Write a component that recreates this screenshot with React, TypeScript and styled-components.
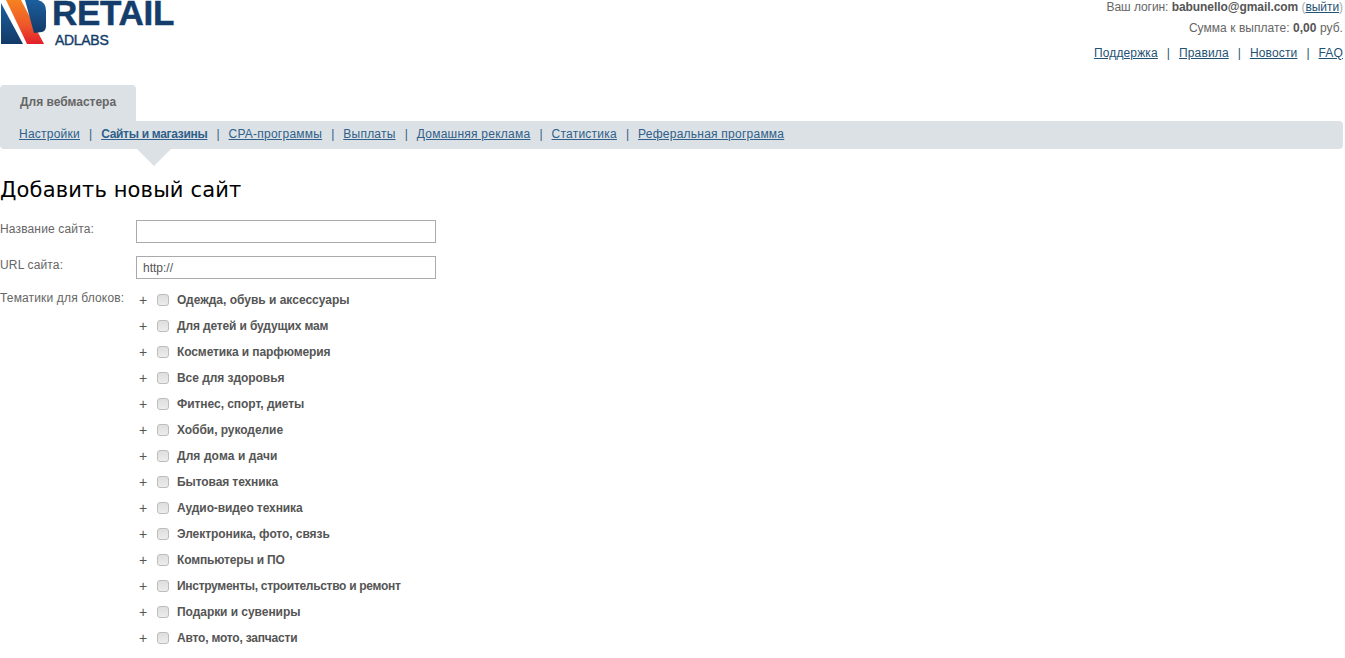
import React from "react";
import styled, { createGlobalStyle } from "styled-components";

const TOP_LINKS = ["Поддержка", "Правила", "Новости", "FAQ"];
const SUB_MENU = [
  "Настройки",
  "Сайты и магазины",
  "CPA-программы",
  "Выплаты",
  "Домашняя реклама",
  "Статистика",
  "Реферальная программа",
];
const TOPICS = [
  { name: "Одежда, обувь и аксессуары", spacing: 0 },
  { name: "Для детей и будущих мам", spacing: -0.14 },
  { name: "Косметика и парфюмерия", spacing: -0.1 },
  { name: "Все для здоровья", spacing: -0.05 },
  { name: "Фитнес, спорт, диеты", spacing: -0.05 },
  { name: "Хобби, рукоделие", spacing: -0.05 },
  { name: "Для дома и дачи", spacing: 0.1 },
  { name: "Бытовая техника", spacing: -0.1 },
  { name: "Аудио-видео техника", spacing: -0.1 },
  { name: "Электроника, фото, связь", spacing: -0.06 },
  { name: "Компьютеры и ПО", spacing: -0.16 },
  { name: "Инструменты, строительство и ремонт", spacing: -0.3 },
  { name: "Подарки и сувениры", spacing: -0.05 },
  { name: "Авто, мото, запчасти", spacing: -0.2 },
];

function Logo() {
  return (
    <svg width="47" height="46" viewBox="0 0 47 46">
      <defs>
        <linearGradient id="logoBand" x1="0" y1="0" x2="0" y2="1">
          <stop offset="0" stopColor="#f5821f" />
          <stop offset="0.55" stopColor="#ee5a2a" />
          <stop offset="1" stopColor="#e31f2b" />
        </linearGradient>
        <linearGradient id="logoBlue" x1="0" y1="0" x2="0" y2="1">
          <stop offset="0" stopColor="#1c5f9e" />
          <stop offset="1" stopColor="#123a68" />
        </linearGradient>
      </defs>
      <path d="M1 3 L23 44 L1 44 Z" fill="url(#logoBlue)" />
      <path d="M6 0 L21 0 L44 44 L27 44 Z" fill="url(#logoBand)" />
      <path
        d="M25 0 L38 0 Q46 2 46 11 L46 26 Q46 31 42 32 L34 33 Z"
        fill="url(#logoBlue)"
      />
    </svg>
  );
}

function App() {
  return (
    <Page>
      <GlobalStyle />
      <Header>
        <Brand>
          <Logo />
          <BrandText>
            <BrandName>RETAIL</BrandName>
            <BrandSub>ADLABS</BrandSub>
          </BrandText>
        </Brand>
        <Account>
          <AccountLine $spacing={-0.06}>
            Ваш логин: <b>babunello@gmail.com</b> <Paren>(</Paren>
            <TopLink href="#">выйти</TopLink>
            <Paren>)</Paren>
          </AccountLine>
          <AccountLine $spacing={0.05}>
            Сумма к выплате: <b>0,00</b> руб.
          </AccountLine>
          <TopNav>
            {TOP_LINKS.map((v, i) => (
              <React.Fragment key={v}>
                {i > 0 && <TopSep>|</TopSep>}
                <TopLink href="#">{v}</TopLink>
              </React.Fragment>
            ))}
          </TopNav>
        </Account>
      </Header>

      <Tab>Для вебмастера</Tab>
      <SubBar>
        {SUB_MENU.map((v, i) => (
          <React.Fragment key={v}>
            {i > 0 && <SubSep>|</SubSep>}
            <SubLink href="#" $active={i === 1}>
              {v}
            </SubLink>
          </React.Fragment>
        ))}
        <Arrow />
      </SubBar>

      <Title>Добавить новый сайт</Title>

      <FieldRow>
        <FieldLabel>Название сайта:</FieldLabel>
        <TextInput type="text" />
      </FieldRow>
      <FieldRow>
        <FieldLabel>URL сайта:</FieldLabel>
        <TextInput type="text" defaultValue="http://" />
      </FieldRow>
      <TopicsRow>
        <FieldLabel $top={4}>Тематики для блоков:</FieldLabel>
        <TopicList>
          {TOPICS.map((t) => (
            <Topic key={t.name}>
              <Plus>+</Plus>
              <Check />
              <TopicName $spacing={t.spacing}>{t.name}</TopicName>
            </Topic>
          ))}
        </TopicList>
      </TopicsRow>
    </Page>
  );
}

const GlobalStyle = createGlobalStyle`
  html, body {
    margin: 0;
    padding: 0;
    background: #fff;
    overflow: hidden;
  }
  body {
    font-family: "Liberation Sans", Arial, sans-serif;
    font-size: 12px;
    color: #666;
  }
`;

const Page = styled.div`
  height: 658px;
  padding-right: 2px;
  overflow: hidden;
`;

const Header = styled.header`
  display: flex;
  justify-content: space-between;
  height: 85px;
`;

const Brand = styled.div`
  display: flex;
  gap: 5px;
  height: 46px;
`;

const BrandText = styled.div`
  display: flex;
  flex-direction: column;
  color: #143d6b;
  font-weight: bold;
`;

const BrandName = styled.div`
  font-size: 35px;
  line-height: 26px;
  height: 26px;
  letter-spacing: -0.3px;
  -webkit-text-stroke: 0.5px #143d6b;
`;

const BrandSub = styled.div`
  font-size: 14px;
  font-weight: normal;
  -webkit-text-stroke: 0.4px #143d6b;
  line-height: 16px;
  letter-spacing: -0.3px;
  margin: 6px 0 0 3px;
`;

const Account = styled.div`
  display: flex;
  flex-direction: column;
  align-items: flex-end;
`;

const AccountLine = styled.div<{ $spacing: number }>`
  line-height: 14px;
  margin-bottom: 7px;
  letter-spacing: ${(p) => p.$spacing}px;
  b {
    font-weight: bold;
    color: #555;
  }
`;

const Paren = styled.span`
  color: #aaa;
`;

const TopNav = styled.nav`
  display: flex;
  margin-top: 4px;
  line-height: 14px;
  letter-spacing: 0.15px;
`;

const TopLink = styled.a`
  color: #1f5273;
  text-decoration: underline;
`;

const TopSep = styled.span`
  color: #1f5273;
  letter-spacing: 0;
  margin: 0 9px;
`;

const Tab = styled.div`
  width: 136px;
  height: 36px;
  box-sizing: border-box;
  padding: 10px 0 0 20px;
  background: #dce1e5;
  border-radius: 4px 4px 0 0;
  font-weight: bold;
  color: #666;
  line-height: 14px;
`;

const SubBar = styled.div`
  position: relative;
  display: flex;
  align-items: center;
  height: 28px;
  box-sizing: border-box;
  padding: 0 0 2px 19px;
  background: #dce1e5;
  border-radius: 0 4px 4px 4px;
`;

const SubLink = styled.a<{ $active?: boolean }>`
  color: #2f5f8a;
  text-decoration: underline;
  font-weight: ${(p) => (p.$active ? "bold" : "normal")};
  letter-spacing: ${(p) => (p.$active ? "-0.3px" : "0.24px")};
`;

const SubSep = styled.span`
  color: #2f5f8a;
  margin: 0 9px;
`;

const Arrow = styled.div`
  position: absolute;
  left: 137px;
  top: 28px;
  border-left: 17px solid transparent;
  border-right: 17px solid transparent;
  border-top: 17px solid #dce1e5;
`;

const Title = styled.h1`
  margin: 28px 0 17px;
  font-family: "DejaVu Sans", sans-serif;
  font-weight: normal;
  font-size: 21px;
  line-height: 26px;
  letter-spacing: 0.15px;
  color: #000;
`;

const FieldRow = styled.div`
  display: flex;
  height: 23px;

  & + & {
    margin-top: 13px;
  }
`;

const FieldLabel = styled.div<{ $top?: number }>`
  width: 136px;
  flex: none;
  line-height: 14px;
  letter-spacing: 0.15px;
  padding-top: ${(p) => p.$top ?? 2}px;
`;

const TextInput = styled.input`
  width: 300px;
  height: 23px;
  box-sizing: border-box;
  border: 1px solid #aaa;
  padding: 0 6px;
  font: 12px "Liberation Sans", Arial, sans-serif;
  color: #555;
  outline: none;
`;

const TopicsRow = styled.div`
  display: flex;
  margin-top: 8px;
`;

const TopicList = styled.div`
  display: flex;
  flex-direction: column;
`;

const Topic = styled.div`
  display: flex;
  align-items: center;
  height: 26px;
`;

const Plus = styled.span`
  width: 21px;
  padding-left: 3px;
  box-sizing: border-box;
  font-size: 14px;
  color: #555;
  opacity: 0.99;
`;

const Check = styled.span`
  width: 10px;
  height: 10px;
  border: 1px solid #bdbdbd;
  border-radius: 3px;
  background: linear-gradient(#dedede, #ececec);
  margin-right: 8px;
`;

const TopicName = styled.span<{ $spacing: number }>`
  font-weight: bold;
  color: #555;
  letter-spacing: ${(p) => p.$spacing}px;
`;

export default App;
